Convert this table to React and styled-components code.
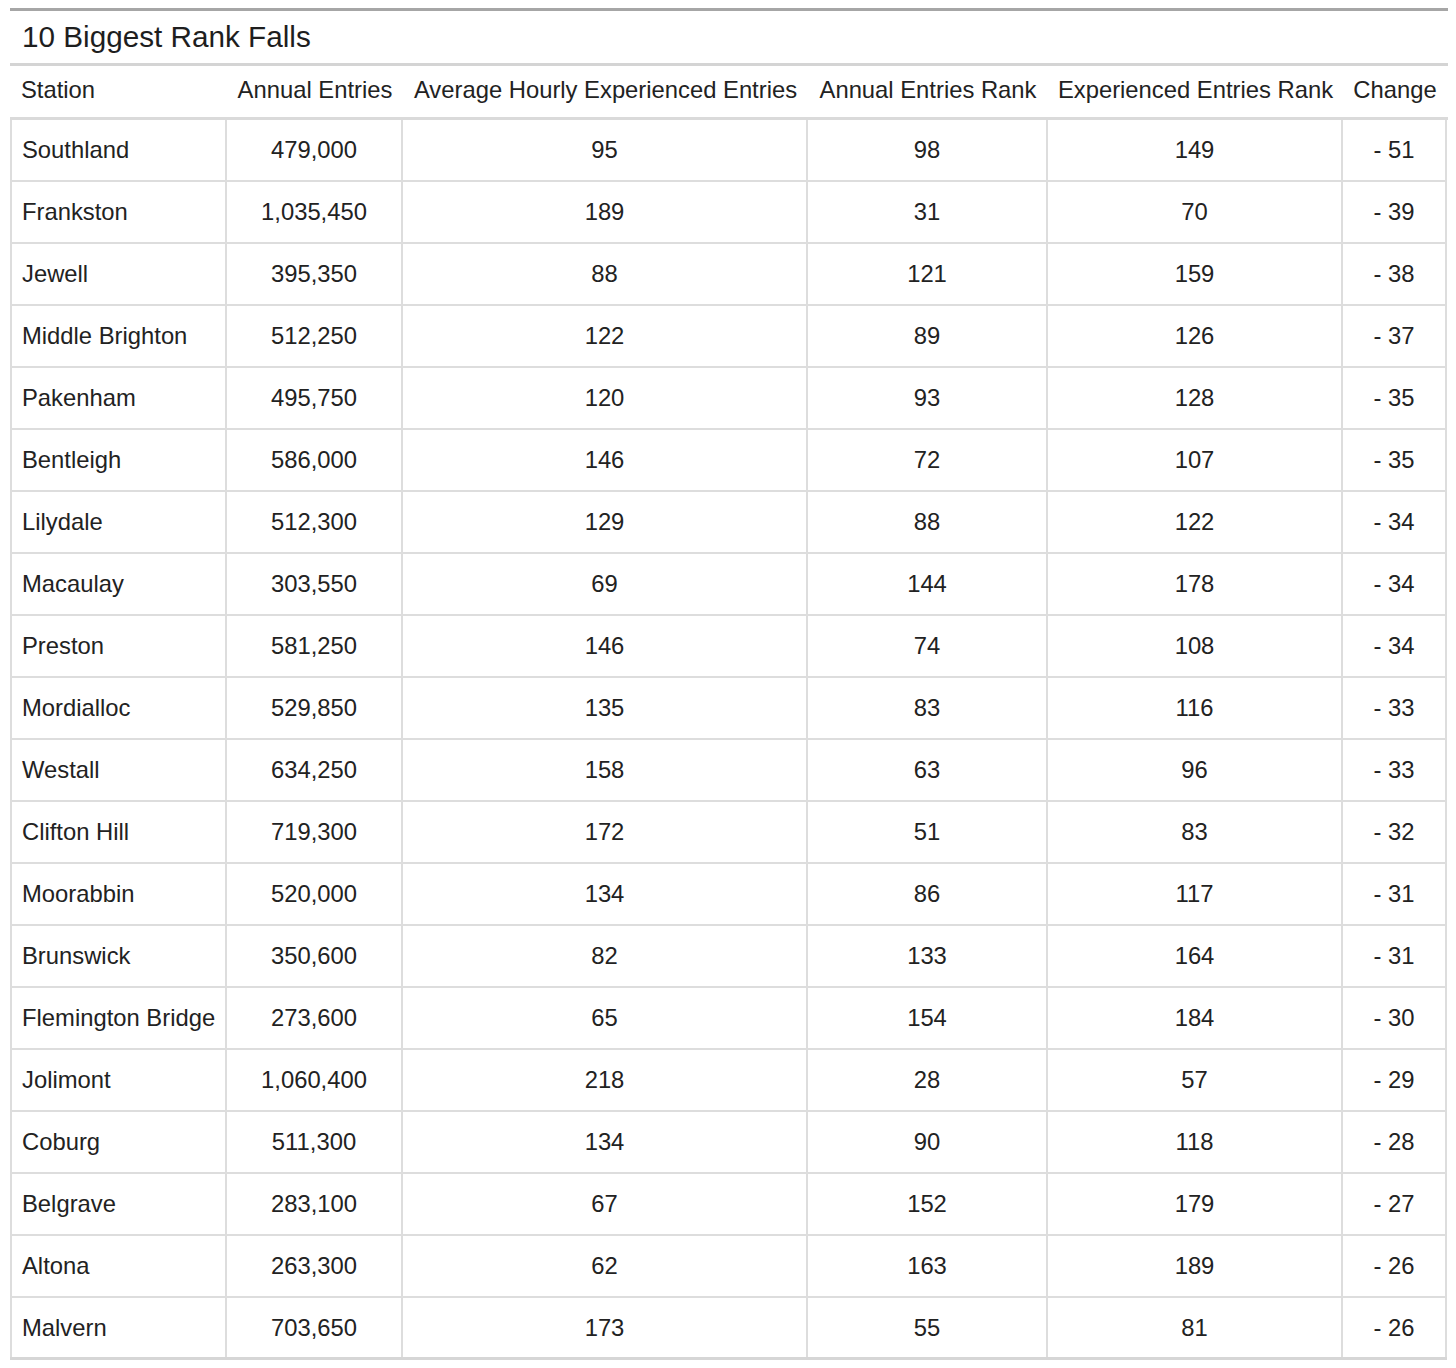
import React from "react";
import styled, { createGlobalStyle } from "styled-components";

const Global = createGlobalStyle`
  html, body { margin: 0; padding: 0; background: #ffffff; }
  body { font-family: "Liberation Sans", Arial, sans-serif; color: #222222; }
`;

const COLS = "215px 176px 405px 240px 295px 104px";

const Page = styled.div`
  padding: 8px 0 0 10px;
`;

const Wrap = styled.div`
  width: 1438px;
  border-top: 3px solid #a6a6a6;
`;

const Caption = styled.div`
  height: 52px;
  display: flex;
  align-items: center;
  padding-left: 12px;
  font-size: 29.7px;
  color: #1e1e1e;
  border-bottom: 3px solid #d4d4d4;
`;

const HeadRow = styled.div`
  display: grid;
  grid-template-columns: 2px ${COLS};
  box-sizing: border-box;
  height: 54px;
  padding-bottom: 4px;
  align-items: center;
  border-bottom: 3px solid #dadada;
  font-size: 23.8px;
`;

const HeadCell = styled.div`
  grid-column: ${(p) => p.$col + 1};
  text-align: ${(p) => (p.$left ? "left" : "center")};
  padding-left: ${(p) => (p.$left ? "9px" : "0")};
  white-space: nowrap;
`;

const Body = styled.div`
  width: 1437px;
  border-bottom: 3px solid #d6d6d6;
`;

const Row = styled.div`
  display: grid;
  grid-template-columns: ${COLS};
  box-sizing: border-box;
  border-left: 2px solid #dddddd;
  border-bottom: ${(p) => (p.$last ? "none" : "2px solid #dddddd")};
  height: ${(p) => (p.$last ? "59px" : "62px")};
  font-size: 23.8px;
`;

const Cell = styled.div`
  box-sizing: border-box;
  border-right: 2px solid #dddddd;
  display: flex;
  align-items: center;
  justify-content: ${(p) => (p.$left ? "flex-start" : "center")};
  padding-left: ${(p) => (p.$left ? "10px" : "0")};
  white-space: nowrap;
`;

const headers = [
  "Station",
  "Annual Entries",
  "Average Hourly Experienced Entries",
  "Annual Entries Rank",
  "Experienced Entries Rank",
  "Change",
];

const rows = [
  ["Southland", "479,000", "95", "98", "149", "- 51"],
  ["Frankston", "1,035,450", "189", "31", "70", "- 39"],
  ["Jewell", "395,350", "88", "121", "159", "- 38"],
  ["Middle Brighton", "512,250", "122", "89", "126", "- 37"],
  ["Pakenham", "495,750", "120", "93", "128", "- 35"],
  ["Bentleigh", "586,000", "146", "72", "107", "- 35"],
  ["Lilydale", "512,300", "129", "88", "122", "- 34"],
  ["Macaulay", "303,550", "69", "144", "178", "- 34"],
  ["Preston", "581,250", "146", "74", "108", "- 34"],
  ["Mordialloc", "529,850", "135", "83", "116", "- 33"],
  ["Westall", "634,250", "158", "63", "96", "- 33"],
  ["Clifton Hill", "719,300", "172", "51", "83", "- 32"],
  ["Moorabbin", "520,000", "134", "86", "117", "- 31"],
  ["Brunswick", "350,600", "82", "133", "164", "- 31"],
  ["Flemington Bridge", "273,600", "65", "154", "184", "- 30"],
  ["Jolimont", "1,060,400", "218", "28", "57", "- 29"],
  ["Coburg", "511,300", "134", "90", "118", "- 28"],
  ["Belgrave", "283,100", "67", "152", "179", "- 27"],
  ["Altona", "263,300", "62", "163", "189", "- 26"],
  ["Malvern", "703,650", "173", "55", "81", "- 26"],
];

export default function App() {
  return (
    <Page>
      <Global />
      <Wrap>
        <Caption>10 Biggest Rank Falls</Caption>
        <HeadRow>
          {headers.map((h, i) => (
            <HeadCell key={h} $col={i + 1} $left={i === 0}>
              {h}
            </HeadCell>
          ))}
        </HeadRow>
        <Body>
          {rows.map((r, ri) => (
            <Row key={r[0]} $last={ri === rows.length - 1}>
              {r.map((c, ci) => (
                <Cell key={ci} $left={ci === 0}>
                  {c}
                </Cell>
              ))}
            </Row>
          ))}
        </Body>
      </Wrap>
    </Page>
  );
}
